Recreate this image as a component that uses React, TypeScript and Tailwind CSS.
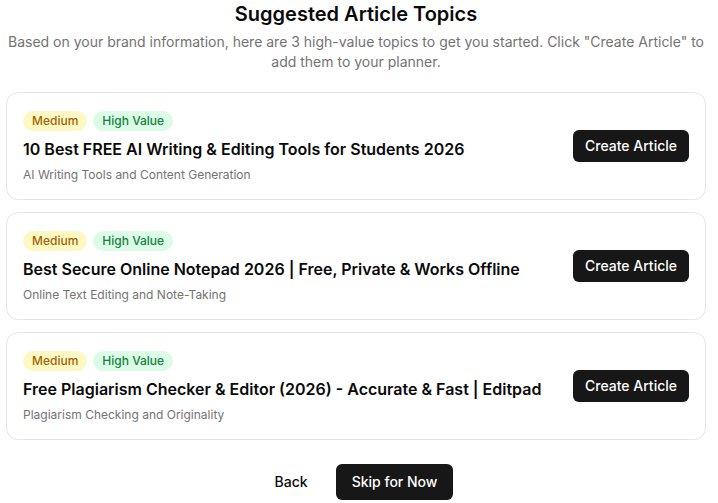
import React from "react";

const topics = [
  {
    title: "10 Best FREE AI Writing & Editing Tools for Students 2026",
    desc: "AI Writing Tools and Content Generation",
  },
  {
    title: "Best Secure Online Notepad 2026 | Free, Private & Works Offline",
    desc: "Online Text Editing and Note-Taking",
  },
  {
    title: "Free Plagiarism Checker & Editor (2026) - Accurate & Fast | Editpad",
    desc: "Plagiarism Checking and Originality",
  },
];

export default function App() {
  return (
    <div
      className="min-h-screen bg-white pl-[6px] pr-[12px] text-[#0a0a0a]"
      style={{ fontFamily: "Inter, 'Noto Sans', sans-serif" }}
    >
      <div className="text-center">
        <h2 className="text-xl font-semibold leading-7">Suggested Article Topics</h2>
        <p className="mt-1 text-sm leading-5 text-[#737373]">
          Based on your brand information, here are 3 high-value topics to get you started. Click "Create Article" to add them to your planner.
        </p>
      </div>
      <div className="mt-5 flex flex-col gap-3">
        {topics.map((t) => (
          <div
            key={t.title}
            className="flex items-center justify-between gap-4 rounded-xl border border-[#e5e5e5] bg-white px-4 pb-4 pt-[18px]"
          >
            <div className="flex min-w-0 flex-col">
              <div className="flex items-center gap-1.5">
                <span className="rounded-full bg-[#fef9c3] px-[9px] py-0.5 text-xs font-medium leading-4 text-[#a16207]">
                  Medium
                </span>
                <span className="rounded-full bg-[#dcfce7] px-[9px] py-0.5 text-xs font-medium leading-4 text-[#15803d]">
                  High Value
                </span>
              </div>
              <div className="mt-1 text-base font-semibold leading-7">{t.title}</div>
              <div className="mt-1 text-xs leading-4 text-[#737373]">{t.desc}</div>
            </div>
            <button className="mb-[2px] h-8 shrink-0 rounded-md bg-[#171717] px-3 text-sm font-medium text-white">
              Create Article
            </button>
          </div>
        ))}
      </div>
      <div className="mt-6 flex items-center justify-center gap-3">
        <button className="h-9 rounded-md px-4 text-sm font-medium">Back</button>
        <button className="h-9 rounded-md bg-[#171717] px-4 text-sm font-medium text-white">
          Skip for Now
        </button>
      </div>
    </div>
  );
}
